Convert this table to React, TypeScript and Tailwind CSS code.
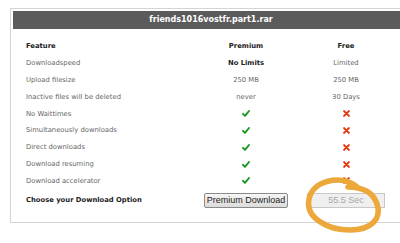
import React from "react";

const Check = () => (
  <svg width="8" height="7" viewBox="0 0 8 7">
    <path d="M1 3.8 L3 5.8 L7 1" stroke="#1c951c" strokeWidth="1.9" fill="none" strokeLinecap="round" strokeLinejoin="round" />
  </svg>
);

const Cross = () => (
  <svg width="7" height="7" viewBox="0 0 7 7">
    <path d="M1.1 1.1 L5.9 5.9 M5.9 1.1 L1.1 5.9" stroke="#e2360e" strokeWidth="2" fill="none" strokeLinecap="round" />
  </svg>
);

type Row = { label: string; p: React.ReactNode; f: React.ReactNode };

const rows: Row[] = [
  { label: "Downloadspeed", p: <span className="font-bold text-[#222]">No Limits</span>, f: "Limited" },
  { label: "Upload filesize", p: "250 MB", f: "250 MB" },
  { label: "Inactive files will be deleted", p: "never", f: "30 Days" },
  { label: "No Waittimes", p: <Check />, f: <Cross /> },
  { label: "Simultaneously downloads", p: <Check />, f: <Cross /> },
  { label: "Direct downloads", p: <Check />, f: <Cross /> },
  { label: "Download resuming", p: <Check />, f: <Cross /> },
  { label: "Download accelerator", p: <Check />, f: <Cross /> },
];

export default function App() {
  return (
    <div className="relative w-[400px] h-[243px] overflow-hidden bg-white" style={{ fontFamily: '"DejaVu Sans", Verdana, sans-serif' }}>
      <div className="ml-[10px] mt-[8px] w-[402px] h-[215px] border border-[#d4d4d4] p-[2px]">
        <div className="h-[18px] bg-[#5b5b5b] flex items-center justify-center text-white font-bold text-[8px]">
          friends1016vostfr.part1.rar
        </div>
        <div className="pl-[13px] pt-[9px] text-[6.8px] text-[#666]">
          <div className="grid grid-cols-[170px_100px_100px] h-[17px] items-center font-bold text-[#222]">
            <div>Feature</div>
            <div className="text-center">Premium</div>
            <div className="text-center">Free</div>
          </div>
          {rows.map((r) => (
            <div key={r.label} className="grid grid-cols-[170px_100px_100px] h-[16.8px] items-center">
              <div>{r.label}</div>
              <div className="flex justify-center">{r.p}</div>
              <div className="flex justify-center">{r.f}</div>
            </div>
          ))}
          <div className="grid grid-cols-[170px_100px_100px] h-[22px] items-center">
            <div className="font-bold text-[#222]">Choose your Download Option</div>
            <div className="flex justify-center">
              <div
                className="w-[84px] h-[15px] flex items-center justify-center border border-[#8a8a8a] rounded-[2px] bg-gradient-to-b from-[#f6f6f6] to-[#dcdcdc] text-[9px] text-[#222]"
                style={{ fontFamily: '"Liberation Sans", Arial, sans-serif' }}
              >
                Premium Download
              </div>
            </div>
            <div className="flex justify-center">
              <div
                className="w-[78px] h-[15px] flex items-center justify-center border border-[#c8c8c8] bg-[#efefef] text-[9px] text-[#a8a8a8]"
                style={{ fontFamily: '"Liberation Sans", Arial, sans-serif' }}
              >
                55.5 Sec
              </div>
            </div>
          </div>
        </div>
      </div>
      <svg className="absolute left-0 top-0" width="400" height="243" viewBox="0 0 400 243">
        <path
          d="M356 186 C 340 175, 313 180, 309 199 C 305 218, 328 230, 350 230 C 372 230, 382 218, 377 204 C 373 192, 362 187, 348 187"
          stroke="#eca83a"
          strokeWidth="5.5"
          fill="none"
          strokeLinecap="round"
        />
      </svg>
    </div>
  );
}
